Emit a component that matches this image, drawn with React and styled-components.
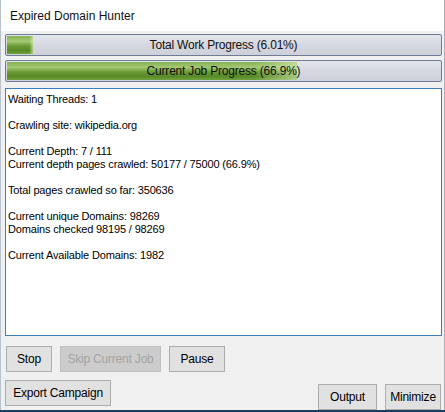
import React from "react";
import styled, { createGlobalStyle } from "styled-components";

const GlobalStyle = createGlobalStyle`
  html, body {
    margin: 0;
    padding: 0;
    background: #1f3d5e;
  }
`;

// Crawler status shown in the log box
const statusLines = [
  "Waiting Threads: 1",
  "",
  "Crawling site: wikipedia.org",
  "",
  "Current Depth: 7 / 111",
  "Current depth pages crawled: 50177 / 75000 (66.9%)",
  "",
  "Total pages crawled so far: 350636",
  "",
  "Current unique Domains: 98269",
  "Domains checked 98195 / 98269",
  "",
  "Current Available Domains: 1982",
];

const App = () => {
  return (
    <>
      <GlobalStyle />
      <Window>
        <TitleBar>Expired Domain Hunter</TitleBar>
        <Client>
          <Progress label="Total Work Progress (6.01%)" value={6.01} />
          <Progress label="Current Job Progress (66.9%)" value={66.9} />
          <LogBox>
            {statusLines.map((line, i) => (
              <LogLine key={i}>{line || "\u00a0"}</LogLine>
            ))}
          </LogBox>
          <ButtonRow>
            <Button $w={46}>Stop</Button>
            <Button $w={101} disabled>
              Skip Current Job
            </Button>
            <Button $w={56}>Pause</Button>
          </ButtonRow>
          <BottomRow>
            <Button $w={106}>Export Campaign</Button>
            <RightGroup>
              <Button $w={59}>Output</Button>
              <Button $w={56}>Minimize</Button>
            </RightGroup>
          </BottomRow>
        </Client>
      </Window>
    </>
  );
};

const Progress = ({ label, value }) => (
  <ProgressTrack>
    <ProgressFill style={{ width: `${value}%` }} />
    <ProgressLabel>{label}</ProgressLabel>
  </ProgressTrack>
);

const Window = styled.div`
  width: 445px;
  height: 410px;
  box-sizing: border-box;
  border-left: 1px solid #b9c2cc;
  border-right: 1px solid #a9b0b8;
  display: flex;
  flex-direction: column;
  background: #f0f0f0;
  font-family: "Liberation Sans", Arial, sans-serif;
  overflow: hidden;
`;

const TitleBar = styled.div`
  height: 31px;
  background: #ffffff;
  display: flex;
  align-items: center;
  padding-left: 9px;
  font-family: "Liberation Sans", Arial, sans-serif;
  font-size: 12px;
  color: #111;
`;

const Client = styled.div`
  flex: 1;
  display: flex;
  flex-direction: column;
  padding: 3px 2px 0 4px;
`;

const ProgressTrack = styled.div`
  position: relative;
  height: 22px;
  margin-bottom: 4px;
  box-sizing: border-box;
  border: 1px solid #6f7c96;
  border-radius: 2px;
  background: linear-gradient(#e4e6ec, #d5d8e0 50%, #cdd0da);
  padding: 1px;
  overflow: hidden;
`;

const ProgressFill = styled.div`
  height: 100%;
  background:
    linear-gradient(90deg, rgba(255, 255, 255, 0) 85%, rgba(220, 240, 190, 0.6)),
    linear-gradient(#86b052, #a4c874 30%, #6a9a34 55%, #578a26 80%, #72a23e);
`;

const ProgressLabel = styled.div`
  position: absolute;
  inset: 0;
  display: flex;
  align-items: center;
  justify-content: center;
  font-size: 12px;
  color: #111;
  letter-spacing: -0.2px;
`;

const LogBox = styled.div`
  margin-top: 2px;
  height: 248px;
  box-sizing: border-box;
  border: 1px solid #3a7fbf;
  background: #fff;
  padding: 4px 2px;
  font-size: 11px;
  letter-spacing: -0.15px;
  color: #000;
`;

const LogLine = styled.div`
  height: 13px;
  line-height: 13px;
  white-space: nowrap;
`;

const ButtonRow = styled.div`
  display: flex;
  gap: 8px;
  padding: 10px 0 0 1px;
`;

const BottomRow = styled.div`
  display: flex;
  justify-content: space-between;
  align-items: flex-start;
  padding-top: 8px;
  padding-right: 1px;
`;

const RightGroup = styled.div`
  display: flex;
  gap: 8px;
  margin-top: 4px;
`;

const Button = styled.button`
  width: ${(p) => p.$w}px;
  height: 26px;
  box-sizing: border-box;
  border: 1px solid #adadad;
  background: #e1e1e1;
  font-family: "Liberation Sans", Arial, sans-serif;
  font-size: 12px;
  color: #000;
  padding: 0;
  letter-spacing: -0.2px;

  &:disabled {
    background: #cccccc;
    border-color: #bfbfbf;
    color: #a3a3a3;
  }
`;

export default App;
